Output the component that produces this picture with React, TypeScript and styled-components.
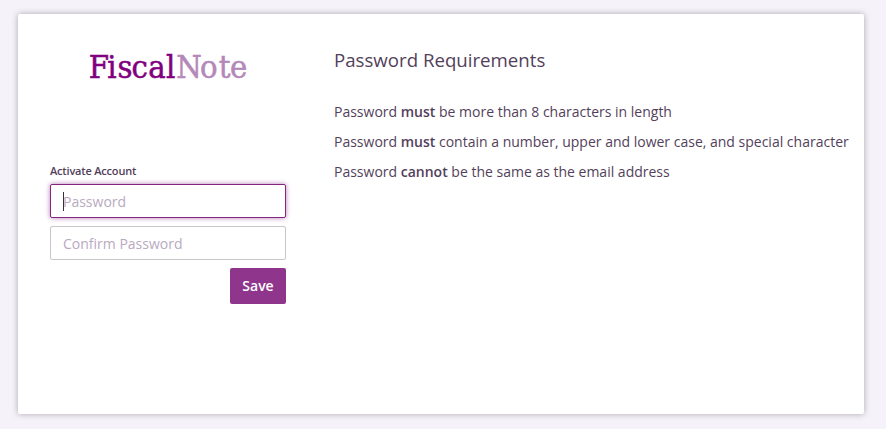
import React from "react";
import styled, { createGlobalStyle } from "styled-components";

const GlobalStyle = createGlobalStyle`
  * { box-sizing: border-box; }
  body { margin: 0; background: #f5f3f9; font-family: "Open Sans", sans-serif; color: #533f5b; }
  h1, h2, p { margin: 0; }
`;
const Page = styled.main`
  height: 429px;
  padding: 14px 22px 15px 18px;
  overflow: hidden;
`;
const Card = styled.section`
  display: flex;
  height: 400px;
  background: #fff;
  border-radius: 2px;
  box-shadow: 0 0 6px rgba(40, 20, 40, 0.35);
`;
const FormColumn = styled.div`
  width: 268px;
  padding: 34px 0 0 32px;
`;
const Logo = styled.svg`
  display: block;
  width: 162px;
  height: 40px;
  margin-left: 37px;
  overflow: visible;
`;
const Form = styled.form`
  display: flex;
  flex-direction: column;
  width: 236px;
  margin-top: 75px;
`;
const FormTitle = styled.h1`
  height: 21px;
  font-size: 11px;
  line-height: 16px;
  font-weight: 600;
  letter-spacing: -0.19px;
`;
const Input = styled.input<{ $active?: boolean }>`
  height: 34px;
  margin-bottom: 8px;
  padding: 1px 12px 0;
  border: 1px solid ${(p) => (p.$active ? "#85257f" : "#c8c6c9")};
  border-radius: 2px;
  outline: none;
  box-shadow: ${(p) => (p.$active ? "0 0 5px rgba(138, 40, 138, 0.6)" : "none")};
  font: 14px "Open Sans", sans-serif;
  &::placeholder { color: #b9aac0; opacity: 1; }
`;
const Field = styled.div`
  position: relative;
  display: flex;
  flex-direction: column;
`;
const Caret = styled.span`
  position: absolute;
  left: 13px;
  top: 8px;
  width: 1px;
  height: 19px;
  background: #333;
`;
const Button = styled.button`
  align-self: flex-end;
  width: 56px;
  height: 36px;
  padding: 0 0 1px;
  border: 0;
  border-radius: 2px;
  background: #8f368c;
  color: #fff;
  font: 600 14px "Open Sans", sans-serif;
`;
const Requirements = styled.div`
  padding: 34px 0 0 48px;
  white-space: nowrap;
`;
const Heading = styled.h2`
  height: 49px;
  font-size: 18.66px;
  line-height: 23px;
  font-weight: 400;
`;
const Rule = styled.p`
  font-size: 14px;
  line-height: 30px;
  strong { font-weight: 600; }
`;

export default function App() {
  return (
    <>
      <GlobalStyle />
      <Page>
        <Card>
          <FormColumn>
            <Logo viewBox="0 0 162 40" role="img" aria-label="FiscalNote" fontFamily="'DejaVu Serif Condensed', 'DejaVu Serif', serif" fontSize="32.5" fontStretch="condensed" strokeWidth="0.5">
              <text x="1.8 20.2 30.5 44.4 61.2 79" y="30.3" fill="#800080" stroke="#800080">Fiscal</text>
              <text x="89.3 113 131.8 143" y="30.3" fill="#b488b8" stroke="#b488b8">Note</text>
            </Logo>
            <Form>
              <FormTitle>Activate Account</FormTitle>
              <Field>
                <Input type="password" placeholder="Password" $active />
                <Caret />
              </Field>
              <Input type="password" placeholder="Confirm Password" />
              <Button type="button">Save</Button>
            </Form>
          </FormColumn>
          <Requirements>
            <Heading>Password Requirements</Heading>
            <Rule>Password <strong>must</strong> be more than 8 characters in length</Rule>
            <Rule>Password <strong>must</strong> contain a number, upper and lower case, and special character</Rule>
            <Rule>Password <strong>cannot</strong> be the same as the email address</Rule>
          </Requirements>
        </Card>
      </Page>
    </>
  );
}
